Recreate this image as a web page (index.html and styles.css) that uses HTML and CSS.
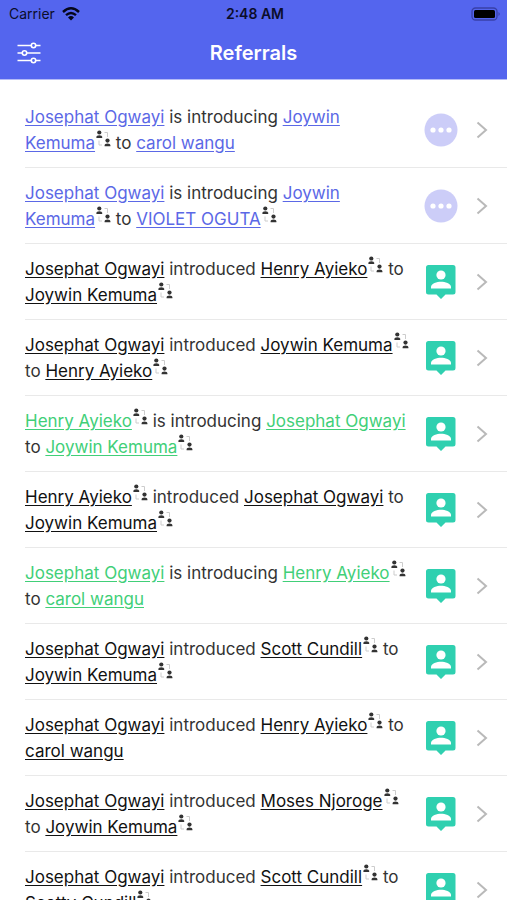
FILE: index.html
```html
<!DOCTYPE html>
<html lang="en">

<head>
    <meta charset="UTF-8">
    <meta name="viewport" content="width=device-width, initial-scale=1">
    <title>Referrals</title>
    <link rel="stylesheet" href="styles.css">
</head>

<body>
    <!-- Shared icons -->
    <svg class="sprite" aria-hidden="true">
        <symbol id="icon-swap" viewBox="0 0 15 17">
            <circle cx="3.3" cy="2.5" r="2.1" />
            <path d="M0.4 8 V6.8 Q0.4 5.2 3.3 5.2 Q6.2 5.2 6.2 6.8 V8 Z" />
            <circle cx="11.5" cy="10.6" r="2.1" />
            <path d="M8.6 16.3 V15 Q8.6 13.4 11.5 13.4 Q14.4 13.4 14.4 15 V16.3 Z" />
            <path class="swap-line" d="M8.5 2.5 H11.5 V7 M3 10.5 V15 H6" />
        </symbol>
        <symbol id="icon-pending" viewBox="0 0 34 34">
            <circle cx="17" cy="17" r="16.5" fill="#cccdf8" />
            <circle cx="9" cy="17" r="2.6" fill="#fff" />
            <circle cx="17" cy="17" r="2.6" fill="#fff" />
            <circle cx="25" cy="17" r="2.6" fill="#fff" />
        </symbol>
        <symbol id="icon-person" viewBox="0 0 34 34">
            <path fill="#2fd0b0" d="M4.500 0 H29 Q31.500 0 31.500 2.500 V27 Q31.500 29.500 29 29.500 H21.500 L17 34 L12.500 29.500 H4.500 Q2 29.500 2 27 V2.500 Q2 0 4.500 0 Z" />
            <circle cx="17" cy="10" r="4.6" fill="#fff" />
            <path fill="#fff" d="M7 23.5 V22 C7 18.5 13 16.8 17 16.8 S27 18.5 27 22 V23.5 Z" />
        </symbol>
        <symbol id="icon-chevron" viewBox="0 0 12 18">
            <path d="M1.500 1.500 L10 9 L1.500 16.500" fill="none" stroke="#b9b9b9" stroke-width="2" />
        </symbol>
    </svg>

    <header class="header">
        <div class="status-bar">
            <div class="carrier">
                <span>Carrier</span>
                <svg class="wifi" viewBox="0 0 18 14" aria-hidden="true">
                    <path d="M1 5 Q9 -2.4 17 5" />
                    <path d="M4 8.2 Q9 3.8 14 8.2" />
                    <path class="wifi-dot" d="M6 10.4 Q9 7.8 12 10.4 L9 13.6 Z" />
                </svg>
            </div>
            <span class="time">2:48 AM</span>
            <svg class="battery" viewBox="0 0 30 14" aria-hidden="true">
                <rect x="1" y="1" width="25" height="12" rx="3.5" fill="none" stroke="#3840a8" stroke-width="1.3" />
                <rect x="3" y="3" width="21" height="8" rx="1.5" />
                <path d="M27.5 5 Q30 7 27.5 9 Z" fill="#3840a8" />
            </svg>
        </div>
        <div class="nav-bar">
            <button class="filter" type="button" aria-label="Filter">
                <svg viewBox="0 0 24 22" aria-hidden="true">
                    <path d="M0.5 3.5 H14 M19 3.5 H23.5 M0.5 11 H5 M10 11 H23.5 M0.5 18.5 H14 M19 18.5 H23.5" />
                    <circle cx="16.5" cy="3.5" r="2.2" />
                    <circle cx="7.5" cy="11" r="2.2" />
                    <circle cx="16.5" cy="18.5" r="2.2" />
                </svg>
            </button>
            <h1 class="title">Referrals</h1>
        </div>
    </header>

    <main>
        <ul class="list">
            <li class="row pending">
                <p class="text"><a href="#">Josephat Ogwayi</a> is introducing <a href="#">Joywin Kemuma</a><svg class="swap"><use href="#icon-swap" /></svg> to <a href="#">carol wangu</a></p>
                <svg class="badge"><use href="#icon-pending" /></svg>
                <button class="open" type="button" aria-label="Open referral"><svg><use href="#icon-chevron" /></svg></button>
            </li>
            <li class="row pending">
                <p class="text"><a href="#">Josephat Ogwayi</a> is introducing <a href="#">Joywin Kemuma</a><svg class="swap"><use href="#icon-swap" /></svg> to <a href="#">VIOLET OGUTA</a><svg class="swap"><use href="#icon-swap" /></svg></p>
                <svg class="badge"><use href="#icon-pending" /></svg>
                <button class="open" type="button" aria-label="Open referral"><svg><use href="#icon-chevron" /></svg></button>
            </li>
            <li class="row">
                <p class="text"><a href="#">Josephat Ogwayi</a> introduced <a href="#">Henry Ayieko</a><svg class="swap"><use href="#icon-swap" /></svg> to <a href="#">Joywin Kemuma</a><svg class="swap"><use href="#icon-swap" /></svg></p>
                <svg class="badge"><use href="#icon-person" /></svg>
                <button class="open" type="button" aria-label="Open referral"><svg><use href="#icon-chevron" /></svg></button>
            </li>
            <li class="row">
                <p class="text"><a href="#">Josephat Ogwayi</a> introduced <a href="#">Joywin Kemuma</a><svg class="swap"><use href="#icon-swap" /></svg> to <a href="#">Henry Ayieko</a><svg class="swap"><use href="#icon-swap" /></svg></p>
                <svg class="badge"><use href="#icon-person" /></svg>
                <button class="open" type="button" aria-label="Open referral"><svg><use href="#icon-chevron" /></svg></button>
            </li>
            <li class="row accepted">
                <p class="text"><a href="#">Henry Ayieko</a><svg class="swap"><use href="#icon-swap" /></svg> is introducing <a href="#">Josephat Ogwayi</a> to <a href="#">Joywin Kemuma</a><svg class="swap"><use href="#icon-swap" /></svg></p>
                <svg class="badge"><use href="#icon-person" /></svg>
                <button class="open" type="button" aria-label="Open referral"><svg><use href="#icon-chevron" /></svg></button>
            </li>
            <li class="row">
                <p class="text"><a href="#">Henry Ayieko</a><svg class="swap"><use href="#icon-swap" /></svg> introduced <a href="#">Josephat Ogwayi</a> to <a href="#">Joywin Kemuma</a><svg class="swap"><use href="#icon-swap" /></svg></p>
                <svg class="badge"><use href="#icon-person" /></svg>
                <button class="open" type="button" aria-label="Open referral"><svg><use href="#icon-chevron" /></svg></button>
            </li>
            <li class="row accepted">
                <p class="text"><a href="#">Josephat Ogwayi</a> is introducing <a href="#">Henry Ayieko</a><svg class="swap"><use href="#icon-swap" /></svg> to <a href="#">carol wangu</a></p>
                <svg class="badge"><use href="#icon-person" /></svg>
                <button class="open" type="button" aria-label="Open referral"><svg><use href="#icon-chevron" /></svg></button>
            </li>
            <li class="row">
                <p class="text"><a href="#">Josephat Ogwayi</a> introduced <a href="#">Scott Cundill</a><svg class="swap"><use href="#icon-swap" /></svg> to <a href="#">Joywin Kemuma</a><svg class="swap"><use href="#icon-swap" /></svg></p>
                <svg class="badge"><use href="#icon-person" /></svg>
                <button class="open" type="button" aria-label="Open referral"><svg><use href="#icon-chevron" /></svg></button>
            </li>
            <li class="row">
                <p class="text"><a href="#">Josephat Ogwayi</a> introduced <a href="#">Henry Ayieko</a><svg class="swap"><use href="#icon-swap" /></svg> to <a href="#">carol wangu</a></p>
                <svg class="badge"><use href="#icon-person" /></svg>
                <button class="open" type="button" aria-label="Open referral"><svg><use href="#icon-chevron" /></svg></button>
            </li>
            <li class="row">
                <p class="text"><a href="#">Josephat Ogwayi</a> introduced <a href="#">Moses Njoroge</a><svg class="swap"><use href="#icon-swap" /></svg> to <a href="#">Joywin Kemuma</a><svg class="swap"><use href="#icon-swap" /></svg></p>
                <svg class="badge"><use href="#icon-person" /></svg>
                <button class="open" type="button" aria-label="Open referral"><svg><use href="#icon-chevron" /></svg></button>
            </li>
            <li class="row">
                <p class="text"><a href="#">Josephat Ogwayi</a> introduced <a href="#">Scott Cundill</a><svg class="swap"><use href="#icon-swap" /></svg> to <a href="#">Scotty Cundill</a><svg class="swap"><use href="#icon-swap" /></svg></p>
                <svg class="badge"><use href="#icon-person" /></svg>
                <button class="open" type="button" aria-label="Open referral"><svg><use href="#icon-chevron" /></svg></button>
            </li>
        </ul>
    </main>
</body>

</html>
```
FILE: styles.css
```css
* {
    box-sizing: border-box;
}

body {
    display: flex;
    flex-direction: column;
    height: 100vh;
    margin: 0;
    overflow: hidden;
    background-color: #fff;
    color: #333;
    font-family: Inter, Roboto, sans-serif;
}

button {
    display: flex;
    padding: 0;
    border: 0;
    background: none;
    cursor: pointer;
}

.sprite {
    display: none;
}

.header {
    flex: none;
    background-color: #5465ee;
    border-bottom: 1px solid #b4bbf7;
}

/* Status bar */
.status-bar {
    display: grid;
    grid-template-columns: 1fr auto 1fr;
    align-items: center;
    height: 27px;
    padding: 0 6px 0 9px;
    color: #0b0d2a;
    font-size: 14px;
}

.carrier {
    display: flex;
    align-items: center;
    gap: 7px;
}

.wifi {
    width: 18px;
    height: 14px;
    fill: none;
    stroke: #05061a;
    stroke-width: 2.4;
}

.wifi-dot {
    fill: #05061a;
    stroke: none;
}

.time {
    font-weight: 600;
}

.battery {
    justify-self: end;
    width: 30px;
    height: 14px;
}

/* Navigation bar */
.nav-bar {
    display: grid;
    grid-template-columns: 1fr auto 1fr;
    align-items: center;
    height: 52px;
    padding: 0 17px;
}

.filter svg {
    width: 24px;
    height: 22px;
    fill: none;
    stroke: #fff;
    stroke-width: 1.6;
}

.title {
    margin: 0;
    color: #fff;
    font-size: 20px;
    font-weight: 600;
}

/* Referral list */
main {
    flex: 1;
    min-height: 0;
    overflow: hidden;
}

.list {
    margin: 0;
    padding: 12px 0 0 25px;
    list-style: none;
}

.row {
    display: flex;
    align-items: center;
    padding: 12px 19px 11px 0;
    border-bottom: 1px solid #e9e9e9;
}

.text {
    flex: 1;
    margin: 0;
    font-size: 17px;
    line-height: 26px;
}

.text a {
    color: #111;
    text-underline-offset: 2px;
}

.pending .text a {
    color: #5b68e6;
}

.accepted .text a {
    color: #41cf78;
}

.swap {
    width: 15px;
    height: 17px;
    margin: -2px 0 0 1px;
    vertical-align: 2px;
    fill: #333;
}

.swap-line {
    fill: none;
    stroke: #ccc;
    stroke-width: 1;
}

.badge {
    flex: none;
    width: 34px;
    height: 34px;
    margin: 0 18px 0 10px;
}

.open svg {
    width: 12px;
    height: 18px;
}
```
